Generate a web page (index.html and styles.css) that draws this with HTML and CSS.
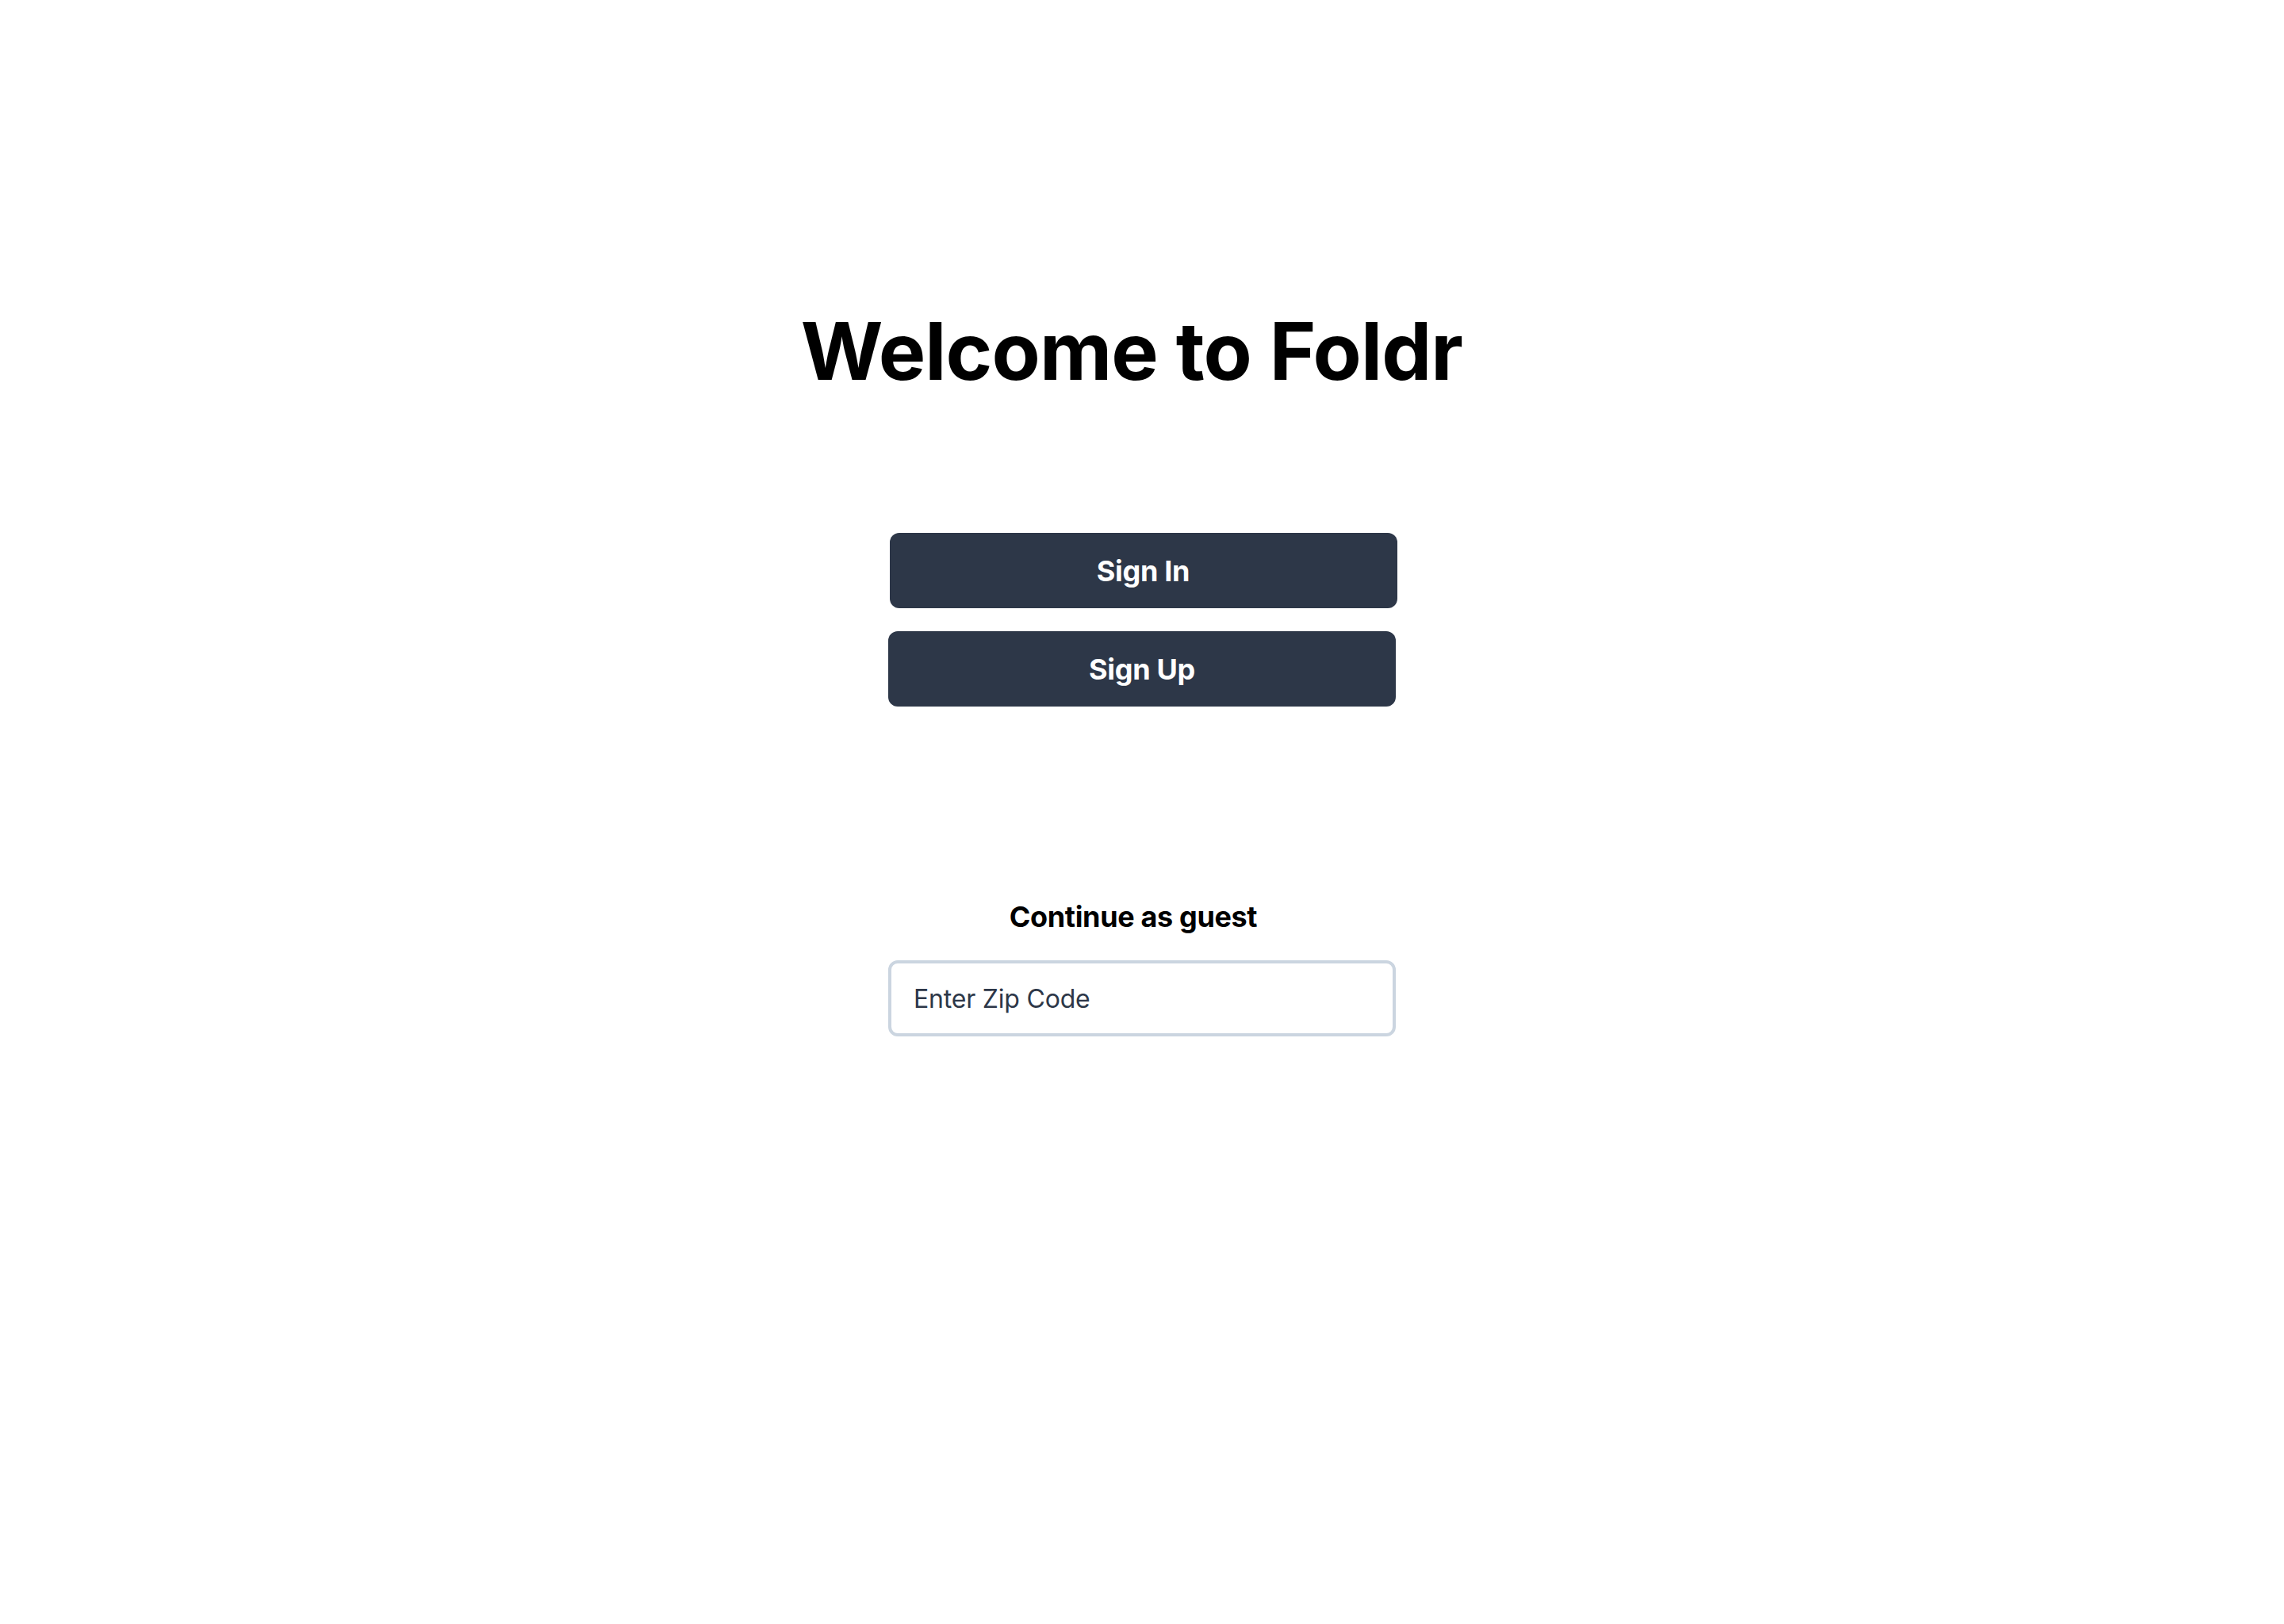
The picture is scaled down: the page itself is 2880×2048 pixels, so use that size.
FILE: index.html
```html
<!DOCTYPE html>
<html lang="en">
<head>
<meta charset="utf-8">
<title>Foldr</title>
<link rel="stylesheet" href="styles.css">
</head>
<body>
<main class="page">
  <h1 class="title">Welcome to Foldr</h1>
  <div class="actions">
    <button class="btn btn-signin" type="button">Sign In</button>
    <button class="btn" type="button">Sign Up</button>
  </div>
  <section class="guest">
    <h2 class="guest-title">Continue as guest</h2>
    <input class="zip" type="text" placeholder="Enter Zip Code">
  </section>
</main>
</body>
</html>
```

FILE: styles.css
```css
html, body {
  margin: 0;
  padding: 0;
  background: #ffffff;
}

body {
  font-family: Inter, "Noto Sans", "Liberation Sans", sans-serif;
  color: #000000;
  width: 2880px;
  height: 2048px;
}

.page {
  display: flex;
  flex-direction: column;
  align-items: center;
  padding-top: 393px;
}

.title {
  margin: 0;
  font-size: 100px;
  line-height: 1;
  font-weight: 700;
  letter-spacing: -0.9px;
  color: #000;
  padding-right: 26px;
}

.actions {
  margin-top: 179px;
  display: flex;
  flex-direction: column;
  align-items: center;
  gap: 29px;
}

.btn {
  width: 640px;
  height: 95px;
  border: none;
  border-radius: 12px;
  background: #2d3748;
  color: #ffffff;
  font-family: Inter, "Noto Sans", "Liberation Sans", sans-serif;
  font-size: 36px;
  font-weight: 700;
  letter-spacing: -0.3px;
  padding: 0;
  cursor: pointer;
}

.btn-signin {
  margin-left: 3px;
}

.guest {
  margin-top: 247px;
  display: flex;
  flex-direction: column;
  align-items: center;
}

.guest-title {
  margin: 0;
  font-size: 36px;
  line-height: 1;
  font-weight: 700;
  letter-spacing: -0.35px;
  color: #000;
  padding-right: 22px;
}

.zip {
  margin-top: 37px;
  box-sizing: border-box;
  width: 640px;
  height: 96px;
  border: 4px solid #cbd5e0;
  border-radius: 12px;
  padding: 0 28px;
  font-family: Inter, "Noto Sans", "Liberation Sans", sans-serif;
  font-size: 32px;
  letter-spacing: -0.2px;
  color: #2d3748;
  background: #fff;
  outline: none;
}

.zip::placeholder {
  color: #2d3748;
  opacity: 1;
}
```
